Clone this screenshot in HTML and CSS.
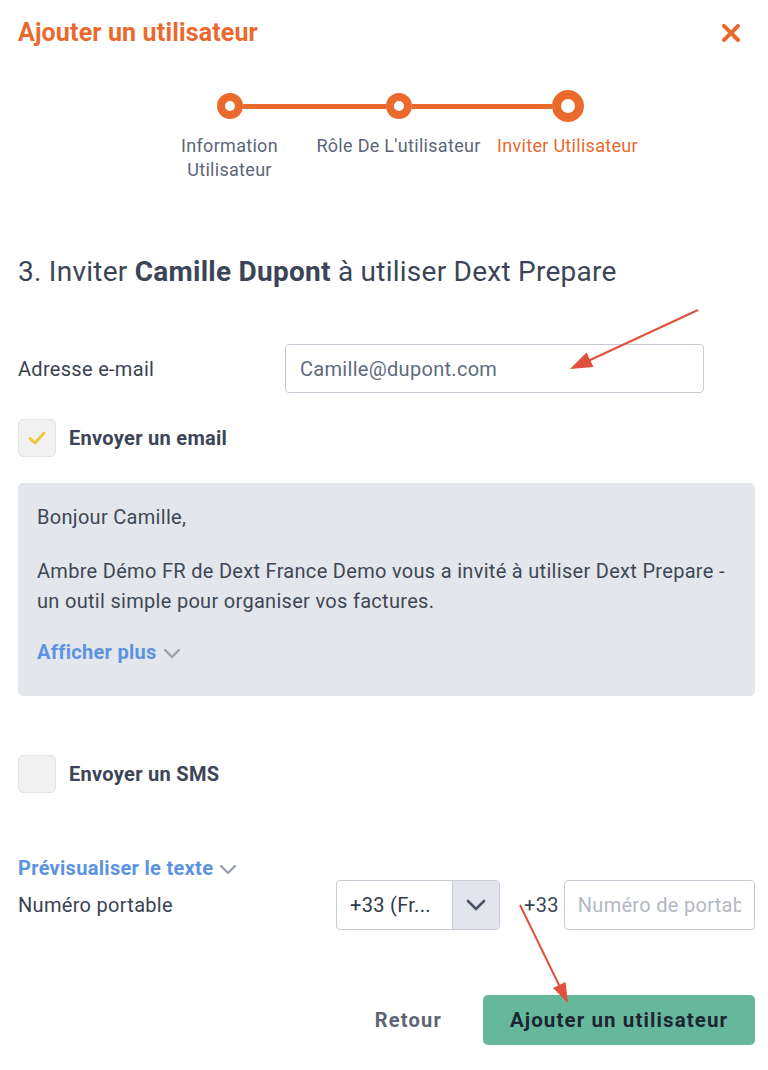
FILE: index.html
```html
<!DOCTYPE html>
<html lang="fr">
<head>
<meta charset="utf-8">
<title>Ajouter un utilisateur</title>
<link rel="stylesheet" href="styles.css">
</head>
<body>
<div class="modal">
  <header class="header">
    <h1 class="title">Ajouter un utilisateur</h1>
    <button class="close" aria-label="Fermer">
      <svg width="18" height="18" viewBox="0 0 18 18"><path d="M2 2 L16 16 M16 2 L2 16" stroke="#ea6a2e" stroke-width="4" stroke-linecap="square"/></svg>
    </button>
  </header>

  <div class="stepper">
    <div class="step first">
      <div class="track"><span class="line"></span><span class="dot"></span><span class="line"></span></div>
      <div class="label">Information<br>Utilisateur</div>
    </div>
    <div class="step">
      <div class="track"><span class="line"></span><span class="dot"></span><span class="line"></span></div>
      <div class="label">Rôle De L'utilisateur</div>
    </div>
    <div class="step last active">
      <div class="track"><span class="line"></span><span class="dot"></span><span class="line"></span></div>
      <div class="label">Inviter Utilisateur</div>
    </div>
  </div>

  <h2 class="heading">3. Inviter <strong>Camille Dupont</strong> à utiliser Dext Prepare</h2>

  <div class="row email-row">
    <label class="field-label" for="email">Adresse e-mail</label>
    <input id="email" class="input email-input" type="text" value="Camille@dupont.com">
  </div>

  <div class="check-row email-check">
    <span class="checkbox">
      <svg width="20" height="16" viewBox="0 0 20 16"><path d="M3 8.5 L8 13 L17 3" fill="none" stroke="#f0c83c" stroke-width="3" stroke-linecap="round" stroke-linejoin="round"/></svg>
    </span>
    <span class="check-label">Envoyer un email</span>
  </div>

  <div class="message">
    <p>Bonjour Camille,</p>
    <p>Ambre Démo FR de Dext France Demo vous a invité à utiliser Dext Prepare - un outil simple pour organiser vos factures.</p>
    <p class="more">Afficher plus
      <svg class="chev" width="18" height="11" viewBox="0 0 18 11"><path d="M2 2 L9 9 L16 2" fill="none" stroke="#9ba2ae" stroke-width="2.4" stroke-linecap="round" stroke-linejoin="round"/></svg>
    </p>
  </div>

  <div class="check-row sms-check">
    <span class="checkbox"></span>
    <span class="check-label">Envoyer un SMS</span>
  </div>

  <div class="preview">Prévisualiser le texte
    <svg class="chev" width="18" height="11" viewBox="0 0 18 11"><path d="M2 2 L9 9 L16 2" fill="none" stroke="#9ba2ae" stroke-width="2.4" stroke-linecap="round" stroke-linejoin="round"/></svg>
  </div>

  <div class="row phone-row">
    <label class="field-label phone-label" for="phone">Numéro portable</label>
    <div class="select">
      <span class="select-value">+33 (Fr...</span>
      <span class="select-btn">
        <svg width="20" height="12" viewBox="0 0 20 12"><path d="M2 2 L10 10 L18 2" fill="none" stroke="#4b5567" stroke-width="2.6" stroke-linecap="round" stroke-linejoin="round"/></svg>
      </span>
    </div>
    <span class="prefix">+33</span>
    <input id="phone" class="input phone-input" type="text" placeholder="Numéro de portable">
  </div>

  <div class="actions">
    <button class="btn-back">Retour</button>
    <button class="btn-primary">Ajouter un utilisateur</button>
  </div>
</div>

<svg class="annotations" width="768" height="1070" viewBox="0 0 768 1070">
  <g stroke="#e0503a" stroke-width="2" fill="#e0503a">
    <line x1="698" y1="310" x2="588" y2="361"/>
    <polygon points="570,369 593.5,367 586.5,352.5" stroke="none"/>
    <line x1="520" y1="905" x2="560" y2="987"/>
    <polygon points="568,1003 565.5,982 553,988" stroke="none"/>
  </g>
</svg>
</body>
</html>
```
FILE: styles.css
```css
* { box-sizing: border-box; }

html, body {
  margin: 0;
  padding: 0;
  background: #ffffff;
}

body {
  font-family: Roboto, "Liberation Sans", Arial, sans-serif;
  color: #3c4557;
  width: 768px;
  height: 1070px;
  overflow: hidden;
  position: relative;
}

.modal {
  padding: 17px 13px 0 18px;
}

.header {
  display: flex;
  justify-content: space-between;
  align-items: center;
  height: 32px;
}

.title {
  margin: 0;
  font-size: 25px;
  line-height: 32px;
  font-weight: 700;
  color: #ea6a2e;
  letter-spacing: 0.15px;
}

.close {
  border: 0;
  background: none;
  padding: 0;
  margin-right: 15px;
  width: 18px;
  height: 18px;
  display: flex;
}

/* Stepper */
.stepper {
  display: grid;
  grid-template-columns: repeat(3, 169px);
  margin-left: 127px;
  margin-top: 41px;
}

.step {
  display: flex;
  flex-direction: column;
  align-items: center;
}

.track {
  display: flex;
  align-items: center;
  width: 100%;
  height: 32px;
}

.line {
  flex: 1;
  height: 5px;
  background: #ea6a2e;
}

.first .line:first-child,
.last .line:last-child {
  background: transparent;
}

.dot {
  width: 26px;
  height: 26px;
  border-radius: 50%;
  border: 8px solid #ea6a2e;
  background: #fff;
  flex: none;
}

.active .dot {
  width: 32px;
  height: 32px;
  border-width: 9.5px;
}

.label {
  margin-top: 12px;
  font-size: 18px;
  line-height: 24px;
  letter-spacing: 0.3px;
  text-align: center;
  color: #5c6679;
  white-space: nowrap;
}

.active .label {
  color: #ea6a2e;
}

/* Heading */
.heading {
  margin: 72px 0 0;
  font-size: 28px;
  line-height: 36px;
  letter-spacing: 0.25px;
  font-weight: 400;
  color: #3c4557;
}

.heading strong {
  font-weight: 700;
}

/* Rows */
.row {
  display: flex;
  align-items: center;
}

.email-row {
  margin-top: 54px;
}

.field-label {
  font-size: 20px;
  line-height: 24px;
  letter-spacing: 0.3px;
  color: #3a4252;
}

.email-row .field-label {
  width: 267px;
}

.input {
  border: 1px solid #c6cbd6;
  border-radius: 4px;
  font-family: inherit;
  font-size: 20px;
  letter-spacing: 0.3px;
  color: #5f6a7f;
  background: #fff;
  margin: 0;
  outline: none;
}

.input::placeholder {
  color: #b3b8c1;
  opacity: 1;
}

.email-input {
  width: 419px;
  height: 49px;
  padding: 0 14px;
}

.check-row {
  display: flex;
  align-items: center;
}

.email-check {
  margin-top: 26px;
}

.checkbox {
  width: 38px;
  height: 38px;
  border-radius: 5px;
  background: #f1f1f2;
  border: 1px solid #e3e4e6;
  display: flex;
  align-items: center;
  justify-content: center;
  flex: none;
}

.check-label {
  margin-left: 13px;
  font-size: 20px;
  letter-spacing: 0.3px;
  font-weight: 700;
  color: #3c4557;
}

/* Message box */
.message {
  margin-top: 26px;
  background: #e3e6ea;
  border-radius: 5px;
  padding: 19px 19px 29px;
  height: 213px;
}

.message p {
  margin: 0;
  font-size: 20px;
  line-height: 30px;
  letter-spacing: 0.3px;
  color: #3f4756;
}

.message p + p {
  margin-top: 24px;
}

.message p.more {
  margin-top: 21px;
  color: #5b93e2;
  font-weight: 700;
  display: flex;
  align-items: center;
}

.chev {
  margin-left: 6px;
  margin-top: 2px;
}

.sms-check {
  margin-top: 59px;
}

.preview {
  margin-top: 63px;
  font-size: 20px;
  line-height: 24px;
  letter-spacing: 0.3px;
  font-weight: 700;
  color: #5b93e2;
  display: flex;
  align-items: center;
}

.phone-row {
  height: 50px;
}

.phone-label {
  width: 318px;
}

.select {
  display: flex;
  width: 164px;
  height: 50px;
  border: 1px solid #c6cbd6;
  border-radius: 4px;
  overflow: hidden;
}

.select-value {
  width: 115px;
  padding-left: 13px;
  display: flex;
  align-items: center;
  font-size: 20px;
  letter-spacing: 0.3px;
  color: #2f3949;
  white-space: nowrap;
}

.select-btn {
  flex: 1;
  background: #e2e6ec;
  border-left: 1px solid #c6cbd6;
  display: flex;
  align-items: center;
  justify-content: center;
}

.prefix {
  margin-left: 24px;
  font-size: 20px;
  letter-spacing: 0.3px;
  color: #3c4557;
}

.phone-input {
  margin-left: 5px;
  flex: 1;
  min-width: 0;
  width: 100px;
  height: 50px;
  padding: 0 13px;
}

/* Actions */
.actions {
  display: flex;
  justify-content: flex-end;
  align-items: center;
  margin-top: 65px;
}

.btn-back {
  border: 0;
  background: none;
  font-family: inherit;
  font-size: 20px;
  font-weight: 700;
  color: #5d6574;
  letter-spacing: 1.2px;
  padding: 0;
  margin-right: 41px;
}

.btn-primary {
  width: 272px;
  height: 50px;
  border: 0;
  border-radius: 5px;
  background: #66b89c;
  font-family: inherit;
  font-size: 20.5px;
  font-weight: 700;
  color: #1d2530;
  letter-spacing: 1.1px;
}

.annotations {
  position: absolute;
  left: 0;
  top: 0;
  pointer-events: none;
}
```
